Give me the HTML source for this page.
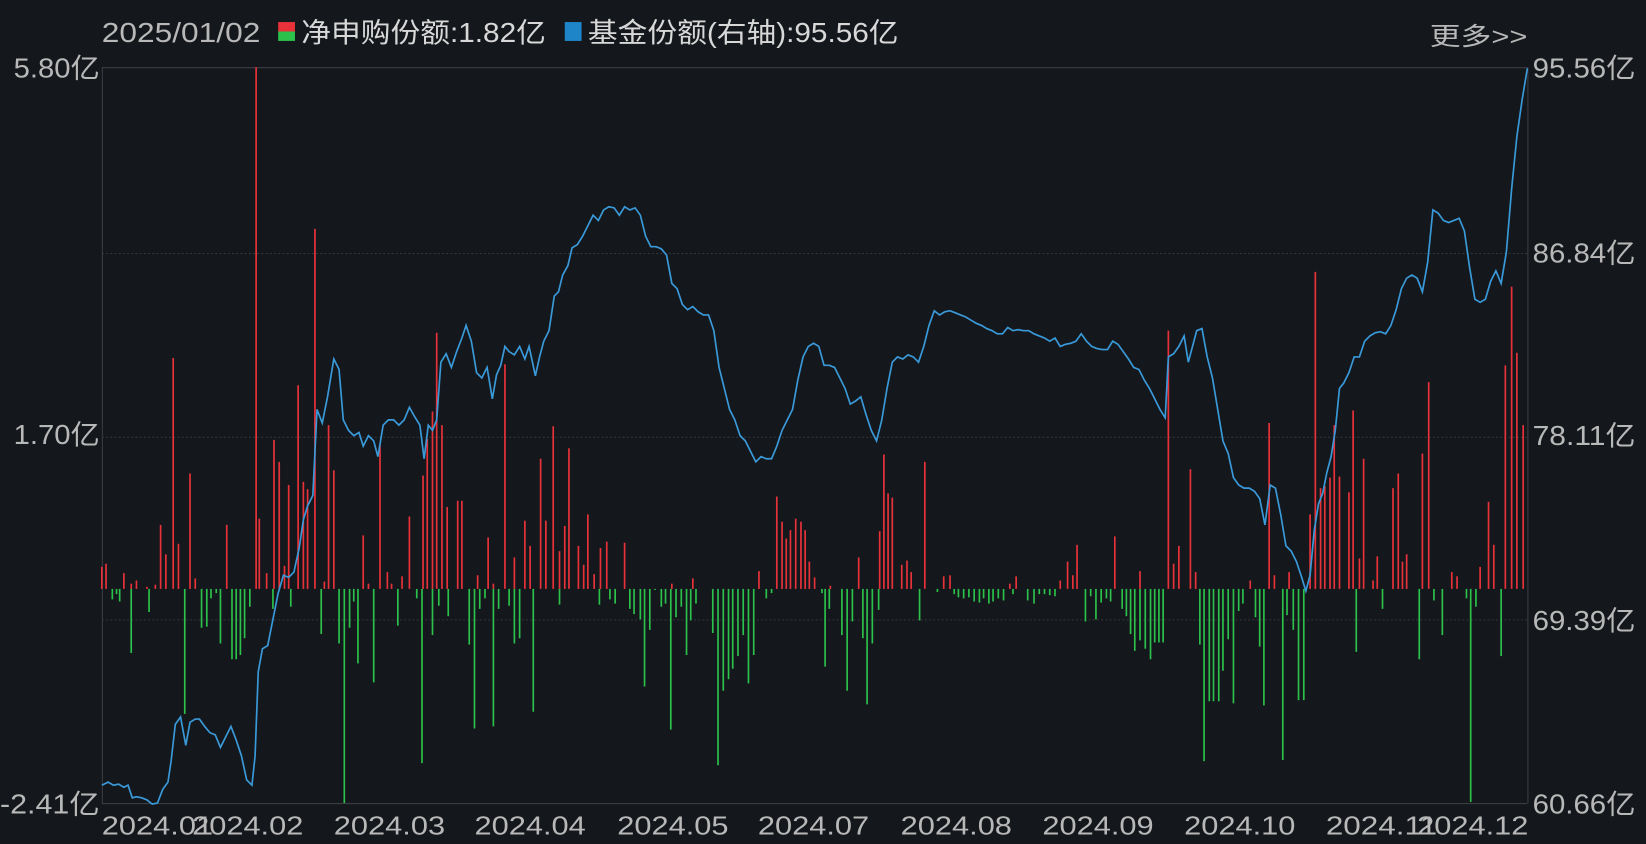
<!DOCTYPE html>
<html><head><meta charset="utf-8"><style>
html,body{margin:0;padding:0;background:#14171c;overflow:hidden}
svg{display:block}
text{font-family:"Liberation Sans","Noto Sans CJK SC",sans-serif}
</style></head><body>
<svg width="1646" height="844" viewBox="0 0 1568 804" preserveAspectRatio="none" xmlns="http://www.w3.org/2000/svg">
<rect width="1568" height="804" fill="#14171c"/>
<g stroke="#3a3d42" stroke-width="1">
<line x1="97" y1="64.5" x2="1455" y2="64.5"/>
<line x1="97" y1="765.5" x2="1455" y2="765.5"/>
<line x1="97.5" y1="64" x2="97.5" y2="765"/>
<line x1="1455.5" y1="64" x2="1455.5" y2="765"/>
</g>
<g stroke="#33363b" stroke-width="1" stroke-dasharray="2,2">
<line x1="97" y1="241.5" x2="1455" y2="241.5"/>
<line x1="97" y1="416.5" x2="1455" y2="416.5"/>
<line x1="97" y1="590.5" x2="1455" y2="590.5"/>
</g>
<g id="bars" stroke-width="1.6"></g>
<polyline id="line" fill="none" stroke="#3a9ad9" stroke-width="1.6" points=""/>
<g fill="#b8b8b8" font-size="26">
<text x="97" y="40" textLength="151" lengthAdjust="spacingAndGlyphs">2025/01/02</text>
<rect x="265" y="21" width="16" height="9" fill="#e8323a"/><rect x="265" y="30" width="16" height="9" fill="#2bc14a"/>
<text x="287" y="40" fill="#d8d8d8" textLength="233" lengthAdjust="spacingAndGlyphs">净申购份额:1.82亿</text>
<rect x="538" y="21" width="16" height="18" fill="#1e86c8"/>
<text x="560" y="40" fill="#d8d8d8" textLength="296" lengthAdjust="spacingAndGlyphs">基金份额(右轴):95.56亿</text>
<text x="1362" y="43" font-size="24" textLength="93" lengthAdjust="spacingAndGlyphs">更多&gt;&gt;</text>
<text x="13" y="74" textLength="82" lengthAdjust="spacingAndGlyphs">5.80亿</text>
<text x="13" y="423" textLength="82" lengthAdjust="spacingAndGlyphs">1.70亿</text>
<text x="0" y="775" textLength="95" lengthAdjust="spacingAndGlyphs">-2.41亿</text>
<text x="1460" y="74" textLength="98" lengthAdjust="spacingAndGlyphs">95.56亿</text>
<text x="1460" y="250" textLength="98" lengthAdjust="spacingAndGlyphs">86.84亿</text>
<text x="1460" y="424" textLength="98" lengthAdjust="spacingAndGlyphs">78.11亿</text>
<text x="1460" y="600" textLength="98" lengthAdjust="spacingAndGlyphs">69.39亿</text>
<text x="1460" y="775" textLength="98" lengthAdjust="spacingAndGlyphs">60.66亿</text>
<g font-size="25">
<text x="97" y="795" textLength="106" lengthAdjust="spacingAndGlyphs">2024.01</text>
<text x="183" y="795" textLength="106" lengthAdjust="spacingAndGlyphs">2024.02</text>
<text x="318" y="795" textLength="106" lengthAdjust="spacingAndGlyphs">2024.03</text>
<text x="452" y="795" textLength="106" lengthAdjust="spacingAndGlyphs">2024.04</text>
<text x="588" y="795" textLength="106" lengthAdjust="spacingAndGlyphs">2024.05</text>
<text x="722" y="795" textLength="106" lengthAdjust="spacingAndGlyphs">2024.07</text>
<text x="858" y="795" textLength="106" lengthAdjust="spacingAndGlyphs">2024.08</text>
<text x="993" y="795" textLength="106" lengthAdjust="spacingAndGlyphs">2024.09</text>
<text x="1128" y="795" textLength="106" lengthAdjust="spacingAndGlyphs">2024.10</text>
<text x="1263" y="795" textLength="106" lengthAdjust="spacingAndGlyphs">2024.11</text>
<text x="1350" y="795" textLength="106" lengthAdjust="spacingAndGlyphs">2024.12</text>
</g>
</g>
</svg>
<script>
var Z=561;
var red="97:540,101:537,118:546,125:556,130:553,140:559,148:557,153:500,158:528,165:341,170:518,181:451,186:551,216:500,244:64,247:494,254:546,261:419,266:440,271:539,275:462,284:367,289:459,293:466,300:218,309:554,313:405,318:448,346:510,351:556,362:424,369:545,373:556,383:549,390:492,403:453,407:418,412:392,416:317,421:405,426:483,436:477,440:477,455:548,465:512,470:556,481:347,490:531,500:496,505:520,515:437,520:496,527:406,533:525,538:501,542:427,551:520,556:538,560:490,566:547,572:522,578:516,595:517,640:556,660:551,723:544,740:473,745:497,749:513,753:505,758:494,763:497,767:505,771:535,776:550,791:558,818:531,838:506,842:433,846:470,850:474,859:538,864:534,868:545,881:440,899:549,905:548,962:556,968:549,1010:553,1017:535,1022:548,1026:519,1062:511,1086:544,1113:315,1118:537,1123:520,1134:447,1139:545,1191:553,1209:403,1214:548,1228:545,1248:490,1253:259,1258:465,1262:463,1267:455,1271:405,1276:454,1285:469,1289:391,1295:532,1299:437,1308:553,1312:530,1327:465,1332:451,1336:535,1340:528,1355:432,1361:364,1383:545,1388:549,1410:540,1418:478,1423:519,1434:348,1440:273,1445:336,1451:405";
var green="107:571,111:566,114:573,125:622,142:583,176:680,192:598,197:597,201:570,206:565,210:613,221:628,225:628,229:624,233:608,238:578,260:580,277:578,306:604,323:613,328:765,333:598,337:573,341:632,356:650,379:596,397:570,402:727,412:605,418:577,427:587,447:614,452:694,457:580,462:570,470:692,475:580,485:577,490:613,495:608,508:678,533:576,571:576,581:571,586:575,600:580,604:585,610:590,614:654,619:600,624:562,630:578,634:575,639:695,644:588,649:578,654:624,658:591,663:575,679:603,684:729,689:658,694:647,698:637,703:625,708:605,713:651,718:624,730:570,735:565,783:565,786:635,790:580,802:605,807:658,812:592,822:608,826:671,831:613,837:581,876:591,893:564,909:566,913:569,918:570,923:569,928:573,933:574,937:570,942:575,946:573,951:570,956:572,965:566,979:572,985:575,990:566,995:566,1000:567,1005:568,1034:592,1039:568,1044:590,1049:574,1054:570,1058:573,1069:580,1073:587,1077:604,1081:620,1086:610,1091:618,1096:628,1100:612,1104:612,1108:612,1143:614,1147:725,1152:668,1156:668,1161:668,1165:639,1170:609,1175:670,1180:582,1184:575,1196:588,1200:616,1204:672,1222:724,1226:586,1232:600,1237:667,1242:667,1292:621,1317:580,1352:628,1366:572,1374:605,1397:570,1401:764,1406:578,1430:625";
var g=document.getElementById('bars'),h='';
red.split(',').forEach(function(p){var a=p.split(':');h+='<line x1="'+a[0]+'" x2="'+a[0]+'" y1="'+a[1]+'" y2="'+Z+'" stroke="#e8323a"/>';});
green.split(',').forEach(function(p){var a=p.split(':');h+='<line x1="'+a[0]+'" x2="'+a[0]+'" y1="'+Z+'" y2="'+a[1]+'" stroke="#2bc14a"/>';});
g.innerHTML=h;
document.getElementById('line').setAttribute('points',"97,748 103,745 108,748 113,747 118,750 122,748 126,760 130,759 135,760 140,762 145,766 150,765 155,752 160,745 163,725 167,690 172,683 177,710 181,688 186,685 190,685 195,692 200,698 205,700 210,712 215,702 220,692 225,705 230,720 235,743 240,748 243,720 246,640 250,618 255,615 260,590 265,565 270,548 275,550 280,545 285,522 289,495 293,482 298,472 302,390 307,403 312,378 318,342 323,352 327,400 332,410 337,415 342,412 346,425 351,415 356,420 360,435 365,405 370,400 375,400 380,405 385,400 390,388 395,397 400,405 404,437 408,405 412,410 416,400 420,345 425,337 430,350 435,335 440,322 444,310 449,325 454,355 459,360 464,350 469,380 473,357 477,348 481,330 485,335 490,338 495,330 500,342 504,330 510,358 514,340 518,325 523,315 528,282 532,278 536,262 541,253 545,236 550,233 555,225 560,215 565,205 570,210 575,200 580,197 585,198 590,205 595,197 600,200 605,198 610,205 615,225 620,235 625,235 630,237 635,243 640,270 645,275 650,290 655,295 660,292 665,297 670,300 675,300 680,315 685,350 690,370 695,390 700,400 705,415 710,420 715,430 720,440 725,435 730,437 735,437 740,425 745,410 750,400 755,390 760,362 765,340 770,330 775,327 780,330 785,348 790,348 795,350 800,360 805,370 810,385 815,382 820,378 825,395 830,410 835,420 840,400 845,370 850,345 855,340 860,342 865,338 870,340 875,345 880,330 885,310 890,296 895,300 900,297 905,296 910,298 915,300 920,302 925,305 930,308 935,310 940,313 945,315 950,318 955,318 960,312 965,315 970,314 975,315 980,315 985,318 990,320 995,322 1000,325 1005,322 1010,330 1015,328 1020,327 1025,325 1030,318 1035,325 1040,330 1045,332 1050,333 1055,333 1060,325 1065,328 1070,335 1075,342 1080,350 1085,352 1090,362 1095,370 1100,380 1105,390 1110,398 1113,340 1118,337 1123,330 1128,320 1132,345 1136,330 1140,315 1145,313 1150,340 1155,360 1160,390 1165,420 1170,432 1175,455 1180,462 1185,465 1190,465 1195,468 1200,475 1205,500 1210,462 1215,465 1220,490 1225,520 1230,525 1235,535 1240,550 1244,563 1248,548 1252,505 1256,480 1260,470 1264,450 1268,435 1272,410 1276,370 1280,365 1285,355 1290,340 1295,340 1300,325 1305,320 1310,317 1315,316 1320,318 1325,310 1330,295 1335,275 1340,265 1345,262 1350,265 1355,278 1360,250 1365,200 1370,203 1375,210 1380,212 1385,210 1390,208 1395,220 1400,255 1405,285 1410,288 1415,285 1420,268 1425,258 1430,270 1435,240 1440,180 1445,130 1450,95 1455,65");
</script>
</body></html>
